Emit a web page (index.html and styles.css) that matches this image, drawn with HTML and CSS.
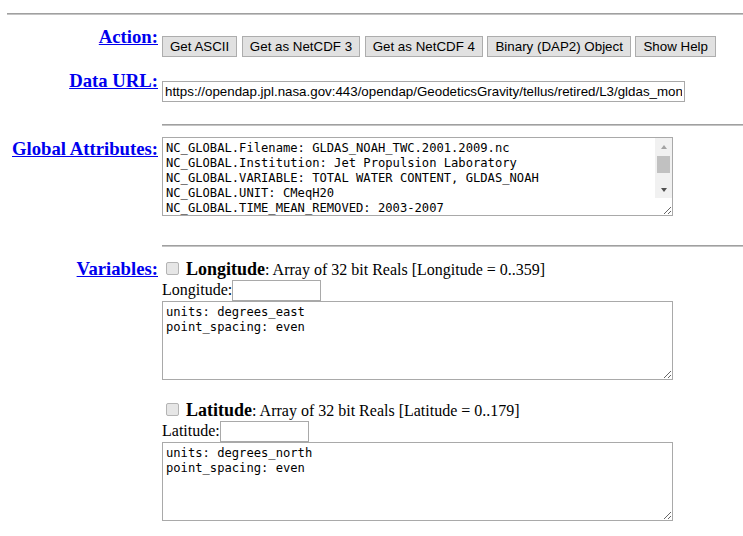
FILE: index.html
```html
<!DOCTYPE html>
<html>
<head>
<meta charset="utf-8">
<title>OPeNDAP Dataset Access Form</title>
<link rel="stylesheet" href="styles.css">
</head>
<body>
<hr class="rule rule-top">

<div class="row row-action">
  <div class="label"><a href="#action">Action:</a></div>
  <div class="content buttons">
    <button class="btn" type="button">Get ASCII</button>
    <button class="btn" type="button">Get as NetCDF 3</button>
    <button class="btn" type="button">Get as NetCDF 4</button>
    <button class="btn" type="button">Binary (DAP2) Object</button>
    <button class="btn" type="button">Show Help</button>
  </div>
</div>

<div class="row row-url">
  <div class="label"><a href="#url">Data URL:</a></div>
  <div class="content">
    <input class="url" type="text" value="https://opendap.jpl.nasa.gov:443/opendap/GeodeticsGravity/tellus/retired/L3/gldas_monthly/netcdf/GLDAS_NOAH_TWC.2001.2009.nc">
  </div>
</div>

<hr class="rule rule-inner rule-2">

<div class="row row-global">
  <div class="label"><a href="#global">Global Attributes:</a></div>
  <div class="content attrs-wrap">
<textarea class="box attrs" rows="5" cols="70">NC_GLOBAL.Filename: GLDAS_NOAH_TWC.2001.2009.nc
NC_GLOBAL.Institution: Jet Propulsion Laboratory
NC_GLOBAL.VARIABLE: TOTAL WATER CONTENT, GLDAS_NOAH
NC_GLOBAL.UNIT: CMeqH20
NC_GLOBAL.TIME_MEAN_REMOVED: 2003-2007
NC_GLOBAL.GRID: 1 degree
NC_GLOBAL.Conventions: CF-1.0
NC_GLOBAL.history: created</textarea>
    <div class="fake-sb" aria-hidden="true">
      <div class="sb-btn"><span class="arrow-up"></span></div>
      <div class="sb-thumb"></div>
      <div class="sb-space"></div>
      <div class="sb-btn"><span class="arrow-down"></span></div>
    </div>
  </div>
</div>

<hr class="rule rule-inner rule-3">

<div class="row row-vars">
  <div class="label"><a href="#vars">Variables:</a></div>
  <div class="content vars">
    <div class="var">
      <div class="var-head">
        <input class="check" type="checkbox">
        <b class="var-name">Longitude</b><span class="var-desc">: Array of 32 bit Reals [Longitude = 0..359]</span>
      </div>
      <div class="var-sel">
        <span class="sel-label">Longitude:</span><input class="sel" type="text">
      </div>
<textarea class="box var-attrs" rows="5" cols="70">units: degrees_east
point_spacing: even</textarea>
    </div>
    <div class="var">
      <div class="var-head">
        <input class="check" type="checkbox">
        <b class="var-name">Latitude</b><span class="var-desc">: Array of 32 bit Reals [Latitude = 0..179]</span>
      </div>
      <div class="var-sel">
        <span class="sel-label">Latitude:</span><input class="sel" type="text">
      </div>
<textarea class="box var-attrs" rows="5" cols="70">units: degrees_north
point_spacing: even</textarea>
    </div>
  </div>
</div>
</body>
</html>
```
FILE: styles.css
```css
html, body {
  margin: 0;
  padding: 0;
  background: #ffffff;
}
body {
  padding-left: 8px;
  font-family: "Liberation Serif", "Times New Roman", serif;
  font-size: 16px;
  color: #000000;
  overflow: hidden;
}

.rule {
  display: block;
  height: 0;
  border: 0;
  border-top: 1px solid #a0a0a0;
  border-bottom: 1px solid #c4c4c4;
  margin-right: 0;
}
.rule-top {
  margin: 13px 0 0 -1px;
}
.rule-inner {
  margin-left: 154px;
}
.rule-2 {
  margin-top: 22px;
  margin-bottom: 0;
}
.rule-3 {
  margin-top: 29px;
  margin-bottom: 0;
}

.row {
  display: flex;
  align-items: flex-start;
  gap: 4px;
}
.label {
  width: 150px;
  flex: none;
  text-align: right;
  font-weight: bold;
  font-size: 18.72px;
  line-height: 20px;
}
.label a {
  color: #0000ee;
  text-decoration: underline;
}
.content {
  flex: none;
}

.row-action {
  margin-top: 12px;
}
.row-action .content {
  margin-top: 9px;
}
.buttons {
  display: flex;
  gap: 4.6px;
}
.btn {
  height: 21px;
  box-sizing: border-box;
  padding: 0 7px;
  border: 1px solid #adadad;
  border-radius: 0;
  background: #e1e1e1;
  color: #000000;
  font-family: "Liberation Sans", Arial, sans-serif;
  font-size: 13.333px;
  line-height: 19px;
  white-space: nowrap;
}

.row-url {
  margin-top: 14px;
}
.row-url .content {
  margin-top: 10px;
}
.url {
  display: block;
  width: 523px;
  height: 21px;
  box-sizing: border-box;
  margin: 0;
  padding: 1px 2px;
  border: 1px solid #a9a9a9;
  font-family: "Liberation Sans", Arial, sans-serif;
  font-size: 13.333px;
  color: #000000;
  background: #ffffff;
}

.row-global {
  margin-top: 11px;
}
.row-global .label {
  margin-top: 2px;
}

.box {
  display: block;
  width: 511px;
  height: 79px;
  box-sizing: border-box;
  margin: 0;
  padding: 3px 2px 0 3px;
  border: 1px solid #a9a9a9;
  font-family: "DejaVu Sans Mono", "Liberation Mono", monospace;
  font-size: 12.15px;
  line-height: 15px;
  color: #000000;
  background: #ffffff;
  overflow: hidden;
}

.attrs-wrap {
  position: relative;
}
.attrs {
  padding-right: 20px;
}
.fake-sb {
  position: absolute;
  top: 1px;
  right: 1px;
  width: 17px;
  height: 60px;
  background: #f1f1f1;
  display: flex;
  flex-direction: column;
}
.sb-btn {
  height: 17px;
  flex: none;
  display: flex;
  align-items: center;
  justify-content: center;
}
.arrow-up {
  width: 0;
  height: 0;
  border-left: 3.5px solid transparent;
  border-right: 3.5px solid transparent;
  border-bottom: 4px solid #a3a3a3;
}
.arrow-down {
  width: 0;
  height: 0;
  border-left: 3.5px solid transparent;
  border-right: 3.5px solid transparent;
  border-top: 4px solid #505050;
}
.sb-thumb {
  flex: none;
  height: 17px;
  margin: 1px 2px 0;
  background: #c1c1c1;
}
.sb-space {
  flex: 1;
}

.row-vars {
  margin-top: 12px;
}
.vars {
  display: flex;
  flex-direction: column;
}
.var {
  margin-bottom: 20px;
}
.var-head {
  display: flex;
  align-items: baseline;
  height: 21px;
  line-height: 20px;
  white-space: nowrap;
}
.check {
  -webkit-appearance: none;
  appearance: none;
  width: 13px;
  height: 13px;
  box-sizing: border-box;
  margin: 0 7px 0 4px;
  border: 1px solid #b4b4b4;
  border-radius: 2px;
  background: #e6e6e6;
  flex: none;
}
.var-name {
  font-size: 18px;
  font-weight: bold;
}
.var-desc {
  font-size: 16px;
}
.var-sel {
  display: flex;
  align-items: baseline;
  height: 21px;
}
.sel-label {
  line-height: 18px;
}
.sel {
  width: 89px;
  height: 21px;
  box-sizing: border-box;
  margin: 0;
  padding: 1px 2px;
  border: 1px solid #a9a9a9;
  font-family: "Liberation Sans", Arial, sans-serif;
  font-size: 13.333px;
  background: #ffffff;
}
```
